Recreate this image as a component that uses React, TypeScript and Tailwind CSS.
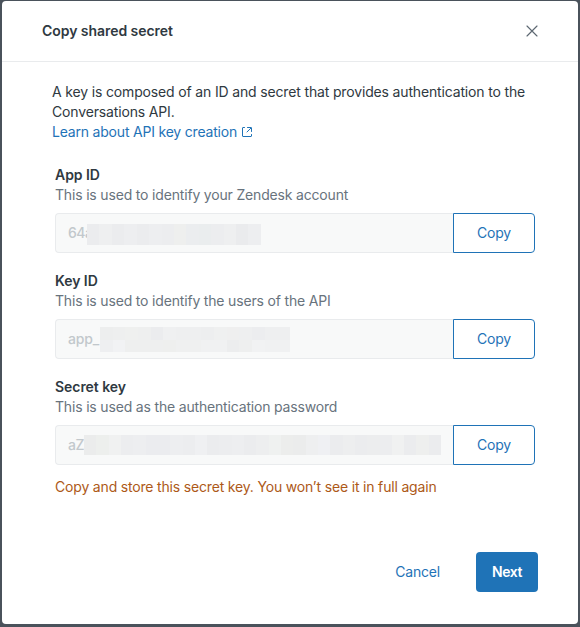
import React from "react";

const appCells = [
  ["bg-[#ebecee]", "bg-[#eeeff0]", "bg-[#ebecee]", "bg-[#edeef0]", "bg-[#ebecee]", "bg-[#edeef0]", "bg-[#ecedef]", "bg-[#eeefee]", "bg-[#ebedef]", "bg-[#eaedee]", "bg-[#ecedef]", "bg-[#eeeff0]", "bg-[#eaebed]", "bg-[#edeef0]"],
];
const keyCells = [
  ["bg-[#edeeee]", "bg-[#eeefef]", "bg-[#eff0ef]", "bg-[#eeefef]", "bg-[#ebecee]", "bg-[#eff0f1]", "bg-[#eeeff0]", "bg-[#eeeff0]", "bg-[#edeeef]", "bg-[#eff0f0]", "bg-[#efefef]", "bg-[#eeeff0]", "bg-[#ecedef]", "bg-[#eeeff0]", "bg-[#eeeff0]"],
  ["bg-[#eeeff1]", "bg-[#f1f2f4]", "bg-[#eeefef]", "bg-[#eeefef]", "bg-[#eeefef]", "bg-[#eeefee]", "bg-[#eff0f0]", "bg-[#eff0f0]", "bg-[#f0f1f2]", "bg-[#f0f1f2]", "bg-[#ecedee]", "bg-[#eeefef]", "bg-[#f1f2f3]", "bg-[#f0f1f2]", "bg-[#f0f1f2]"],
];
const secretCells = [
  ["bg-[#ebecec]", "bg-[#edefed]", "bg-[#f0f1f1]", "bg-[#ecedef]", "bg-[#edeef0]", "bg-[#ebecef]", "bg-[#ebecef]", "bg-[#edeef0]", "bg-[#ecedef]", "bg-[#eff0f2]", "bg-[#ebecee]", "bg-[#ecedef]", "bg-[#edeef0]", "bg-[#ebecee]", "bg-[#edeeef]", "bg-[#eff1f0]", "bg-[#ecedec]", "bg-[#ebecec]", "bg-[#eeeff0]", "bg-[#eff0f3]", "bg-[#ebecee]", "bg-[#edeeef]", "bg-[#ebecee]", "bg-[#ecedee]", "bg-[#ecedef]", "bg-[#f0f1f1]", "bg-[#ebecee]", "bg-[#eeefee]", "bg-[#ebecee]"],
];

function Mosaic({ rows, className }: { rows: string[][]; className: string }) {
  return (
    <div className={`relative flex shrink-0 flex-col bg-[#edeeef] ${className}`}>
      {rows.map((row, r) => (
        <div key={r} className="flex flex-1">
          {row.map((cell, c) => (
            <div key={c} className={`flex-1 ${cell}`} />
          ))}
        </div>
      ))}
    </div>
  );
}

interface FieldProps {
  label: string;
  hint: string;
  value: string;
  valueWidth: string;
  rows: string[][];
  mosaic: string;
}

function Field({ label, hint, value, valueWidth, rows, mosaic }: FieldProps) {
  return (
    <div className="h-[106px]">
      <div className="text-[14px] leading-5 font-semibold tracking-[-0.05px]">{label}</div>
      <div className="text-[14px] leading-5 tracking-[-0.175px] text-[#68737d]">{hint}</div>
      <div className="mt-2 flex h-10 w-[480px]">
        <div className="flex flex-1 items-center rounded-l border border-r-0 border-[#e9ebed] bg-[#f8f9f9] pl-3 text-[14px] text-[#c2c8cc]">
          <span className={`shrink-0 leading-5 font-medium whitespace-nowrap ${valueWidth}`}>{value}</span>
          <Mosaic rows={rows} className={mosaic} />
        </div>
        <button className="w-[82px] rounded-r border border-[#1f73b7] pb-0.5 text-[14px] tracking-[-0.15px] text-[#1f73b7]">Copy</button>
      </div>
    </div>
  );
}

export default function App() {
  return (
    <div className="h-[627px] w-[580px] bg-[#4a525b] px-0.5 pt-px font-['Inter','Liberation_Sans',sans-serif] text-[#2f3941]">
      <div role="dialog" className="flex h-[623px] flex-col rounded bg-white">
        <header className="flex h-[61px] shrink-0 items-center justify-between border-b border-[#e9ebed] px-10">
          <h1 className="text-[14px] leading-5 font-semibold tracking-[-0.05px]">Copy shared secret</h1>
          <button aria-label="Close" className="flex size-3 items-center justify-center text-[#5d6872]">
            <svg width="12" height="12" viewBox="0 0 12 12" fill="none" stroke="currentColor" strokeWidth="1.15" strokeLinecap="round">
              <path d="M1 1l10 10M11 1L1 11" />
            </svg>
          </button>
        </header>
        <main className="flex-1 pt-5 pl-[50px]">
          <p className="text-[14px] leading-5 tracking-[-0.155px] whitespace-nowrap">
            A key is composed of an ID and secret that provides authentication to the
            <br />
            Conversations API.
          </p>
          <a className="flex items-center text-[14px] leading-5 text-[#1f73b7]">
            <span className="tracking-[-0.2px]">Learn about API key creation</span>
            <svg className="ml-1" width="12" height="12" viewBox="0 0 12 12" fill="none" stroke="currentColor" strokeLinecap="round">
              <path d="M10.5 8.5V10c0 .3-.2.5-.5.5H2c-.3 0-.5-.2-.5-.5V2c0-.3.2-.5.5-.5h1.5M6 6l4-4m-3.5-.5H10c.3 0 .5.2.5.5v3.5" />
            </svg>
          </a>
          <div className="mt-[23px] ml-[3px]">
            <Field label="App ID" hint="This is used to identify your Zendesk account" value="64a" valueWidth="w-[19px] tracking-[-0.5px]" rows={appCells} mosaic="mt-[3px] h-[21px] w-[174px]" />
            <Field label="Key ID" hint="This is used to identify the users of the API" value="app_" valueWidth="w-8 tracking-[-0.15px]" rows={keyCells} mosaic="mt-px h-[25px] w-[190px]" />
            <Field label="Secret key" hint="This is used as the authentication password" value="aZ" valueWidth="w-4 tracking-[-0.4px]" rows={secretCells} mosaic="h-5 w-[357px]" />
            <p className="-mt-[6px] text-[14px] leading-5 tracking-[-0.175px] text-[#ad5918]">Copy and store this secret key. You won’t see it in full again</p>
          </div>
        </main>
        <footer className="flex h-[72px] shrink-0 items-start justify-end pr-10 text-[14px]">
          <button className="h-10 pb-0.5 tracking-[-0.2px] text-[#1f73b7]">Cancel</button>
          <button className="ml-9 h-10 w-[62px] rounded bg-[#1f73b7] pb-0.5 font-semibold tracking-[-0.45px] text-white">Next</button>
        </footer>
      </div>
    </div>
  );
}
